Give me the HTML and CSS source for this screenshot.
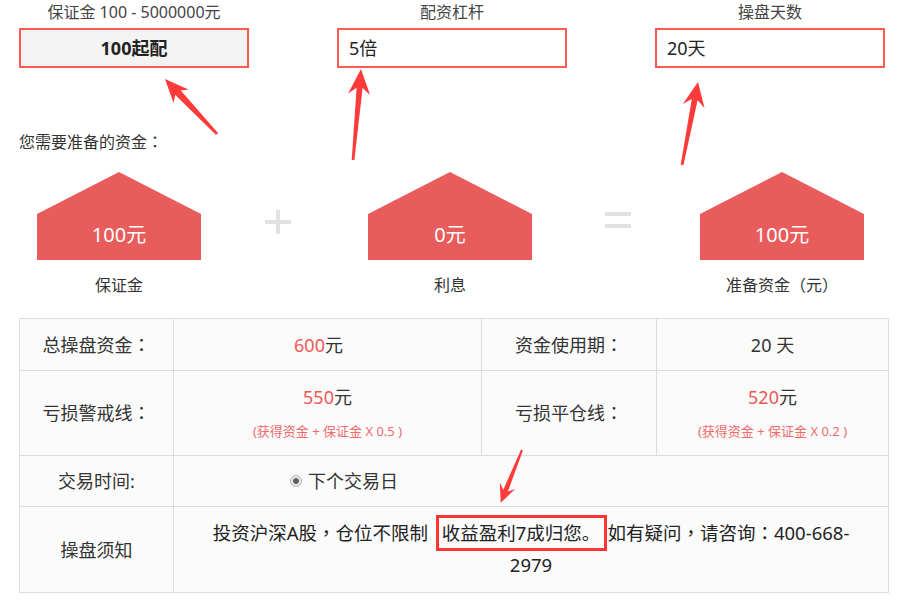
FILE: index.html
```html
<!DOCTYPE html>
<html lang="zh-CN">
<head>
<meta charset="utf-8">
<title>配资</title>
<link rel="stylesheet" href="styles.css">
</head>
<body>
<div class="page">
  <div class="inputs">
    <div class="field">
      <div class="field-label">保证金 100 - 5000000元</div>
      <div class="box box-gray">100起配</div>
    </div>
    <div class="field">
      <div class="field-label">配资杠杆</div>
      <div class="box">5倍</div>
    </div>
    <div class="field">
      <div class="field-label">操盘天数</div>
      <div class="box">20天</div>
    </div>
  </div>

  <div class="need">您需要准备的资金<span class="p" lang="zh-TW">：</span></div>

  <div class="houses">
    <div class="house-col">
      <div class="house">100元</div>
      <div class="house-label">保证金</div>
    </div>
    <div class="op op-plus">
      <svg width="26" height="24" viewBox="0 0 26 24"><rect x="0" y="10" width="26" height="4" fill="#e2e2e2"/><rect x="11" y="0" width="4" height="24" fill="#e2e2e2"/></svg>
    </div>
    <div class="house-col">
      <div class="house">0元</div>
      <div class="house-label">利息</div>
    </div>
    <div class="op op-eq">
      <svg width="26" height="17" viewBox="0 0 26 17"><rect x="0" y="0" width="26" height="4" fill="#e2e2e2"/><rect x="0" y="12" width="26" height="4" fill="#e2e2e2"/></svg>
    </div>
    <div class="house-col">
      <div class="house">100元</div>
      <div class="house-label">准备资金<span class="p" lang="zh-TW">（</span>元<span class="p" lang="zh-TW">）</span></div>
    </div>
  </div>

  <div class="table">
    <div class="cell"><span>总操盘资金<span class="p" lang="zh-TW">：</span></span></div>
    <div class="cell cell-shift"><div class="val"><span class="red">600</span>元</div></div>
    <div class="cell"><span>资金使用期<span class="p" lang="zh-TW">：</span></span></div>
    <div class="cell"><div class="val">20 天</div></div>

    <div class="cell"><span>亏损警戒线<span class="p" lang="zh-TW">：</span></span></div>
    <div class="cell"><div class="val"><span class="red">550</span>元</div><div class="note">(获得资金 + 保证金 X 0.5 )</div></div>
    <div class="cell"><span>亏损平仓线<span class="p" lang="zh-TW">：</span></span></div>
    <div class="cell"><div class="val"><span class="red">520</span>元</div><div class="note">(获得资金 + 保证金 X 0.2 )</div></div>

    <div class="cell"><span>交易时间:</span></div>
    <div class="cell span3 cell-left"><span class="radio"></span><span>下个交易日</span></div>

    <div class="cell"><span>操盘须知</span></div>
    <div class="cell span3 notice">投资沪深A股<span class="p" lang="zh-TW">，</span>仓位不限制 <span class="hl">收益盈利7成归您。</span>如有疑问<span class="p" lang="zh-TW">，</span>请咨询<span class="p" lang="zh-TW">：</span>400-668-<br>2979</div>
  </div>

  <svg class="arrows" width="900" height="604" viewBox="0 0 900 604">
    <polygon fill="#fd3b3b" points="165,79 188.5,89.5 180.8,90.4 218.2,133.3 215.9,134.8 175.3,94.9 173.5,103"/>
    <polygon fill="#fd3b3b" points="361,69 370.1,95 362.6,88.1 354.4,160.1 351.7,159.9 356.6,87.7 348.1,93.4"/>
    <polygon fill="#fd3b3b" points="698,82 704.5,108 697.6,100.3 683.4,165.2 680.7,164.8 691.8,99.1 682.8,104"/>
    <polygon fill="#fd3b3b" points="500.7,502.7 515.2,489 507.9,491.5 522.9,450.4 521.1,449.6 503.3,489.7 499.8,482.5"/>
  </svg>
</div>
</body>
</html>
```

FILE: styles.css
```css
* { box-sizing: border-box; }
html, body { margin: 0; padding: 0; background: #fff; }
body {
  font-family: "Noto Sans", "Noto Sans CJK SC", sans-serif;
  color: #333;
}
.p {
  font-family: "Noto Sans CJK TC", sans-serif;
  line-height: 1;
}
.page {
  position: relative;
  width: 900px;
  height: 604px;
  overflow: hidden;
}
.inputs {
  display: flex;
  gap: 88px;
  padding-left: 19px;
}
.field {
  width: 230px;
  display: flex;
  flex-direction: column;
}
.field-label {
  text-align: center;
  font-size: 16px;
  line-height: 24px;
  color: #444;
  margin-bottom: 4px;
}
.box {
  height: 40px;
  border: 2px solid #fb5a55;
  font-size: 18px;
  line-height: 36px;
  padding: 0 10px;
  color: #222;
  background: #fff;
}
.box-gray {
  background: #f3f3f3;
  text-align: center;
  font-weight: bold;
}
.need {
  margin: 62px 0 0 19px;
  height: 24px;
  font-size: 16px;
  line-height: 24px;
  color: #333;
}
.houses {
  display: flex;
  align-items: flex-start;
  margin-top: 18px;
  padding-left: 37px;
}
.house-col {
  width: 164px;
  display: flex;
  flex-direction: column;
  align-items: center;
}
.house {
  width: 164px;
  height: 88px;
  background: #e95c5c;
  clip-path: polygon(50% 0, 100% 47.7%, 100% 100%, 0 100%, 0 47.7%);
  color: #fff;
  font-size: 20px;
  line-height: 28px;
  display: flex;
  align-items: flex-end;
  justify-content: center;
  padding-bottom: 11px;
}
.house-label {
  margin-top: 13px;
  height: 24px;
  font-size: 16px;
  line-height: 24px;
  color: #333;
  white-space: nowrap;
}
.op {
  height: 88px;
  display: flex;
  align-items: center;
  justify-content: center;
}
.op-plus { width: 167px; padding: 12px 14px 0 0; }
.op-eq { width: 168px; padding: 8px 0 0 3px; }
.table {
  margin: 21px 0 0 19px;
  width: 870px;
  display: grid;
  grid-template-columns: 153px 307px 174px 231px;
  grid-template-rows: 51px 84px 50px 85px;
  gap: 1px;
  background: #dcdcdc;
  border: 1px solid #dcdcdc;
}
.cell {
  background: #fbfbfb;
  display: flex;
  flex-direction: column;
  align-items: center;
  justify-content: center;
  font-size: 18px;
  line-height: 24px;
  color: #333;
}
.cell-shift { padding-right: 18px; }
.val { font-size: 18px; line-height: 24px; }
.red { color: #f05656; }
.note {
  margin-top: 13px;
  font-size: 13px;
  line-height: 19px;
  color: #f06a6a;
}
.span3 { grid-column: span 3; }
.cell-left {
  flex-direction: row;
  justify-content: flex-start;
  padding-left: 116px;
}
.radio {
  display: inline-block;
  width: 12px;
  height: 12px;
  border-radius: 50%;
  border: 1px solid #b8b8b8;
  background: radial-gradient(circle, #606060 0, #606060 2.5px, #e6e6e6 3.2px);
  margin-right: 6px;
}
.notice {
  display: block;
  text-align: center;
  font-size: 18.5px;
  line-height: 32px;
  padding-top: 10px;
  color: #222;
}
.hl {
  border: 3px solid #fd3434;
  padding: 2px 4px 3px 3px;
  margin-left: 3px;
}
.arrows {
  position: absolute;
  top: 0;
  left: 0;
  pointer-events: none;
}
```
